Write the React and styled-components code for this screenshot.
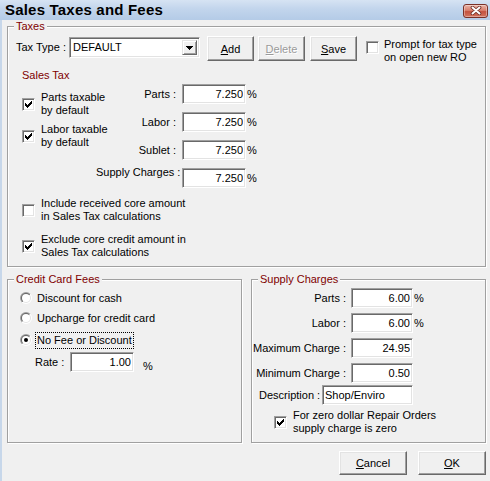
import React, { useId } from 'react';
import styled, { createGlobalStyle } from 'styled-components';

const GlobalStyle = createGlobalStyle`
  html, body {
    margin: 0;
    padding: 0;
    background: #f0f0f0;
  }
  body {
    font-family: "Liberation Sans", Arial, sans-serif;
    font-size: 11px;
    color: #000;
  }
`;

const Window = styled.div`
  width: 490px;
  height: 481px;
  display: flex;
  flex-direction: column;
  overflow: hidden;
  background: #f0f0f0;
`;

const TitleBar = styled.div`
  height: 20px;
  flex: none;
  display: flex;
  align-items: center;
  justify-content: space-between;
  padding: 0 2px 0 5px;
  box-sizing: border-box;
  background: linear-gradient(to bottom, #d6e3f3 0%, #c2d5ec 45%, #b4cbe7 100%);
`;

const Title = styled.span`
  font-size: 15px;
  font-weight: bold;
  letter-spacing: 0.2px;
  line-height: 20px;
`;

const CloseButton = styled.div`
  width: 25px;
  height: 14px;
  margin-top: 1px;
  box-sizing: border-box;
  border: 1px solid #7a3128;
  border-radius: 3px;
  display: flex;
  align-items: center;
  justify-content: center;
  background: linear-gradient(to bottom, #eab4a7 0%, #d8806e 45%, #c4523f 55%, #d2745f 100%);
  box-shadow: inset 0 0 0 1px rgba(255, 255, 255, 0.35);
`;

const Body = styled.div`
  flex: 1;
  display: flex;
  flex-direction: column;
  border-left: 2px solid #c7d7ea;
  padding: 0 4px 0 5px;
`;

const Group = styled.div`
  box-sizing: border-box;
  border: 1px solid #a0a0a0;
  box-shadow: 1px 1px 0 #fff, inset 1px 1px 0 #fff;
  margin-top: ${p => p.$top}px;
  padding-bottom: ${p => p.$bottom || 0}px;
  height: ${p => (p.$height ? `${p.$height}px` : 'auto')};
  width: ${p => (p.$width ? `${p.$width}px` : 'auto')};
  display: flex;
  flex-direction: column;
`;

const Caption = styled.div`
  align-self: flex-start;
  margin: -7px 0 0 6px;
  padding: 0 2px;
  line-height: 13px;
  color: #800000;
  background: #f0f0f0;
`;

const ToolRow = styled.div`
  display: flex;
  align-items: flex-start;
  margin-top: 3px;
  padding-left: 8px;
  height: 25px;
`;

const FieldLabel = styled.span`
  width: ${p => p.$width}px;
  flex: none;
  line-height: 13px;
  margin-top: ${p => p.$top || 0}px;
  text-align: ${p => (p.$right ? 'right' : 'left')};
  white-space: nowrap;
`;

const Combo = styled.div`
  width: 131px;
  height: 21px;
  margin-top: 1px;
  box-sizing: border-box;
  border: 1px solid;
  border-color: #a0a0a0 #fff #fff #a0a0a0;
  box-shadow: inset 1px 1px 0 #696969, inset -1px -1px 0 #e3e3e3;
  background: #fff;
  display: flex;
  align-items: center;
  padding: 2px 2px 2px 3px;
`;

const ComboText = styled.span`
  flex: 1;
  line-height: 13px;
`;

const ComboArrow = styled.div`
  width: 15px;
  height: 15px;
  box-sizing: border-box;
  background: #f0f0f0;
  border: 1px solid;
  border-color: #e3e3e3 #696969 #696969 #e3e3e3;
  box-shadow: inset 1px 1px 0 #fff, inset -1px -1px 0 #a0a0a0;
  display: flex;
  align-items: center;
  justify-content: center;
`;

const Button = styled.div`
  width: ${p => p.$width}px;
  height: ${p => p.$height || 25}px;
  margin-left: ${p => p.$gap || 0}px;
  flex: none;
  box-sizing: border-box;
  border: 1px solid;
  border-color: #fff #696969 #696969 #fff;
  box-shadow: inset -1px -1px 0 #a0a0a0, inset 1px 1px 0 #e3e3e3;
  background: #f0f0f0;
  display: flex;
  align-items: center;
  justify-content: center;
  color: ${p => (p.$disabled ? '#9a9a9a' : '#000')};
  text-shadow: ${p => (p.$disabled ? '1px 1px 0 #fff' : 'none')};
`;

const CheckRow = styled.div`
  display: flex;
  align-items: ${p => (p.$top ? 'flex-start' : 'center')};
  gap: ${p => p.$gap || 6}px;
  margin-top: ${p => p.$mt || 0}px;
  margin-left: ${p => p.$ml || 0}px;
  flex: none;
`;

const CheckText = styled.span`
  line-height: 13px;
  white-space: nowrap;
  margin-top: ${p => p.$mt || 0}px;
`;

const Box = styled.span`
  width: 13px;
  height: 13px;
  flex: none;
  box-sizing: border-box;
  border: 1px solid;
  border-color: #a0a0a0 #fff #fff #a0a0a0;
  box-shadow: inset 1px 1px 0 #696969, inset -1px -1px 0 #e3e3e3;
  background: #fff;
  display: flex;
  align-items: center;
  justify-content: center;
  margin-top: ${p => p.$mt || 0}px;
`;

const SectionLabel = styled.div`
  margin: 8px 0 0 14px;
  line-height: 13px;
  color: #800000;
`;

const SalesTaxRow = styled.div`
  display: flex;
  margin-top: 2px;
  padding-left: 14px;
`;

const CheckColumn = styled.div`
  width: 74px;
  flex: none;
  display: flex;
  flex-direction: column;
  gap: 6px;
  padding-top: 7px;
`;

const RateColumn = styled.div`
  display: flex;
  flex-direction: column;
  gap: 8px;
`;

const RateRow = styled.div`
  display: flex;
  align-items: center;
  height: 20px;
  margin-top: ${p => p.$mt || 0}px;
  padding-left: ${p => p.$pl || 0}px;
`;

const RateLabel = styled.span`
  width: ${p => p.$width}px;
  flex: none;
  text-align: right;
  line-height: 13px;
  white-space: nowrap;
  margin-right: ${p => p.$gap}px;
  align-self: ${p => (p.$raise ? 'flex-start' : 'center')};
  margin-top: ${p => (p.$raise ? -2.5 : 0)}px;
`;

const Field = styled.input`
  width: ${p => p.$width}px;
  height: 20px;
  flex: none;
  box-sizing: border-box;
  margin: 0;
  padding: 0 2px 0 2px;
  border: 1px solid;
  border-color: #a0a0a0 #fff #fff #a0a0a0;
  box-shadow: inset 1px 1px 0 #696969, inset -1px -1px 0 #e3e3e3;
  background: #fff;
  font: 11px "Liberation Sans", Arial, sans-serif;
  color: #000;
  text-align: ${p => (p.$left ? 'left' : 'right')};
  outline: none;
`;

const Percent = styled.span`
  margin-left: ${p => p.$gap || 1}px;
  line-height: 13px;
  align-self: ${p => (p.$low ? 'flex-start' : 'center')};
  margin-top: ${p => (p.$low ? 8 : 0)}px;
`;

const BottomRow = styled.div`
  display: flex;
  gap: 9px;
`;

const RadioRow = styled.div`
  display: flex;
  align-items: center;
  height: 20px;
  padding-left: 12px;
  gap: 3px;
  margin-top: ${p => p.$mt || 0}px;
`;

const RadioText = styled.span`
  line-height: 13px;
  padding: 1px 1px;
  border: 1px dotted ${p => (p.$focus ? '#000' : 'transparent')};
`;

const GridRows = styled.div`
  display: flex;
  flex-direction: column;
  gap: 5px;
  margin-top: 2px;
`;

const ButtonBar = styled.div`
  display: flex;
  justify-content: flex-end;
  gap: 11px;
  margin-top: 8px;
`;

const CheckMark = () => (
  <svg width="7" height="7" viewBox="0 0 7 7" shapeRendering="crispEdges">
    <polygon points="0,2 2,4 6,0 7,0 7,3 2,7 0,5" fill="#000" />
  </svg>
);

const Checkbox = ({ checked, mt }) => (
  <Box $mt={mt}>{checked && <CheckMark />}</Box>
);

const Radio = ({ checked }) => {
  const id = useId().replace(/[^a-zA-Z0-9]/g, '');
  return (
    <svg width="12" height="12" viewBox="0 0 12 12">
      <defs>
        <linearGradient id={`${id}o`} x1="0" y1="0" x2="1" y2="1">
          <stop offset="0.5" stopColor="#a0a0a0" />
          <stop offset="0.5" stopColor="#ffffff" />
        </linearGradient>
        <linearGradient id={`${id}i`} x1="0" y1="0" x2="1" y2="1">
          <stop offset="0.5" stopColor="#696969" />
          <stop offset="0.5" stopColor="#e3e3e3" />
        </linearGradient>
      </defs>
      <circle cx="6" cy="6" r="6" fill={`url(#${id}o)`} />
      <circle cx="6" cy="6" r="5" fill={`url(#${id}i)`} />
      <circle cx="6" cy="6" r="4" fill="#fff" />
      {checked && <circle cx="6" cy="6" r="2" fill="#000" />}
    </svg>
  );
};

const salesRates = [
  { label: 'Parts :', value: '7.250' },
  { label: 'Labor :', value: '7.250' },
  { label: 'Sublet :', value: '7.250' },
  { label: 'Supply Charges :', value: '7.250', raise: true }
];

const supplyRows = [
  { label: 'Parts :', value: '6.00', pct: true },
  { label: 'Labor :', value: '6.00', pct: true },
  { label: 'Maximum Charge :', value: '24.95' },
  { label: 'Minimum Charge :', value: '0.50' }
];

const App = () => (
  <Window>
    <GlobalStyle />
    <TitleBar>
      <Title>Sales Taxes and Fees</Title>
      <CloseButton>
        <svg width="12" height="9" viewBox="0 0 12 9">
          <path d="M2.5 1.5 L9.5 7.5 M9.5 1.5 L2.5 7.5" stroke="#6b2a22" strokeWidth="3.6" strokeLinecap="round" />
          <path d="M2.5 1.5 L9.5 7.5 M9.5 1.5 L2.5 7.5" stroke="#fff" strokeWidth="2" strokeLinecap="round" />
        </svg>
      </CloseButton>
    </TitleBar>

    <Body>
      <Group $top={6} $bottom={7}>
        <Caption>Taxes</Caption>
        <ToolRow>
          <FieldLabel $width={53} $top={4.5}>Tax Type :</FieldLabel>
          <Combo>
            <ComboText>DEFAULT</ComboText>
            <ComboArrow>
              <svg width="7" height="4" viewBox="0 0 7 4" shapeRendering="crispEdges">
                <polygon points="0,0 7,0 3.5,4" fill="#000" />
              </svg>
            </ComboArrow>
          </Combo>
          <Button $width={47} $gap={7}><span><u>A</u>dd</span></Button>
          <Button $width={47} $gap={4} $disabled><span><u>D</u>elete</span></Button>
          <Button $width={47} $gap={5}><span><u>S</u>ave</span></Button>
          <CheckRow $top $gap={5} $ml={9}>
            <Checkbox mt={5} />
            <CheckText $mt={1.5}>Prompt for tax type<br />on open new RO</CheckText>
          </CheckRow>
        </ToolRow>

        <SectionLabel>Sales Tax</SectionLabel>
        <SalesTaxRow>
          <CheckColumn>
            <CheckRow>
              <Checkbox checked />
              <CheckText>Parts taxable<br />by default</CheckText>
            </CheckRow>
            <CheckRow>
              <Checkbox checked />
              <CheckText>Labor taxable<br />by default</CheckText>
            </CheckRow>
          </CheckColumn>
          <RateColumn>
            {salesRates.map(r => (
              <RateRow key={r.label}>
                <RateLabel $width={80} $gap={6} $raise={r.raise}>{r.label}</RateLabel>
                <Field $width={64} defaultValue={r.value} readOnly />
                <Percent>%</Percent>
              </RateRow>
            ))}
          </RateColumn>
        </SalesTaxRow>

        <CheckRow $mt={9} $ml={14}>
          <Checkbox />
          <CheckText>Include received core amount<br />in Sales Tax calculations</CheckText>
        </CheckRow>
        <CheckRow $mt={10} $ml={14}>
          <Checkbox checked />
          <CheckText>Exclude core credit amount in<br />Sales Tax calculations</CheckText>
        </CheckRow>
      </Group>

      <BottomRow>
        <Group $top={12} $height={164} $width={235}>
          <Caption>Credit Card Fees</Caption>
          <RadioRow $mt={2}>
            <Radio />
            <RadioText>Discount for cash</RadioText>
          </RadioRow>
          <RadioRow>
            <Radio />
            <RadioText>Upcharge for credit card</RadioText>
          </RadioRow>
          <RadioRow $mt={2}>
            <Radio checked />
            <RadioText $focus>No Fee or Discount</RadioText>
          </RadioRow>
          <RateRow $mt={2} $pl={27}>
            <FieldLabel $width={35}>Rate :</FieldLabel>
            <Field $width={64} defaultValue="1.00" readOnly />
            <Percent $gap={9} $low>%</Percent>
          </RateRow>
        </Group>

        <Group $top={12} $height={164} $width={235}>
          <Caption>Supply Charges</Caption>
          <GridRows>
            {supplyRows.map(r => (
              <RateRow key={r.label}>
                <RateLabel $width={94} $gap={5}>{r.label}</RateLabel>
                <Field $width={62} defaultValue={r.value} readOnly />
                {r.pct && <Percent>%</Percent>}
              </RateRow>
            ))}
          </GridRows>
          <RateRow $mt={2} $pl={7}>
            <FieldLabel $width={63}>Description :</FieldLabel>
            <Field $width={91} $left defaultValue="Shop/Enviro" readOnly />
          </RateRow>
          <CheckRow $mt={4} $ml={22}>
            <Checkbox checked />
            <CheckText>For zero dollar Repair Orders<br />supply charge is zero</CheckText>
          </CheckRow>
        </Group>
      </BottomRow>

      <ButtonBar>
        <Button $width={68} $height={24}><span><u>C</u>ancel</span></Button>
        <Button $width={68} $height={24}><span><u>O</u>K</span></Button>
      </ButtonBar>
    </Body>
  </Window>
);

export default App;
